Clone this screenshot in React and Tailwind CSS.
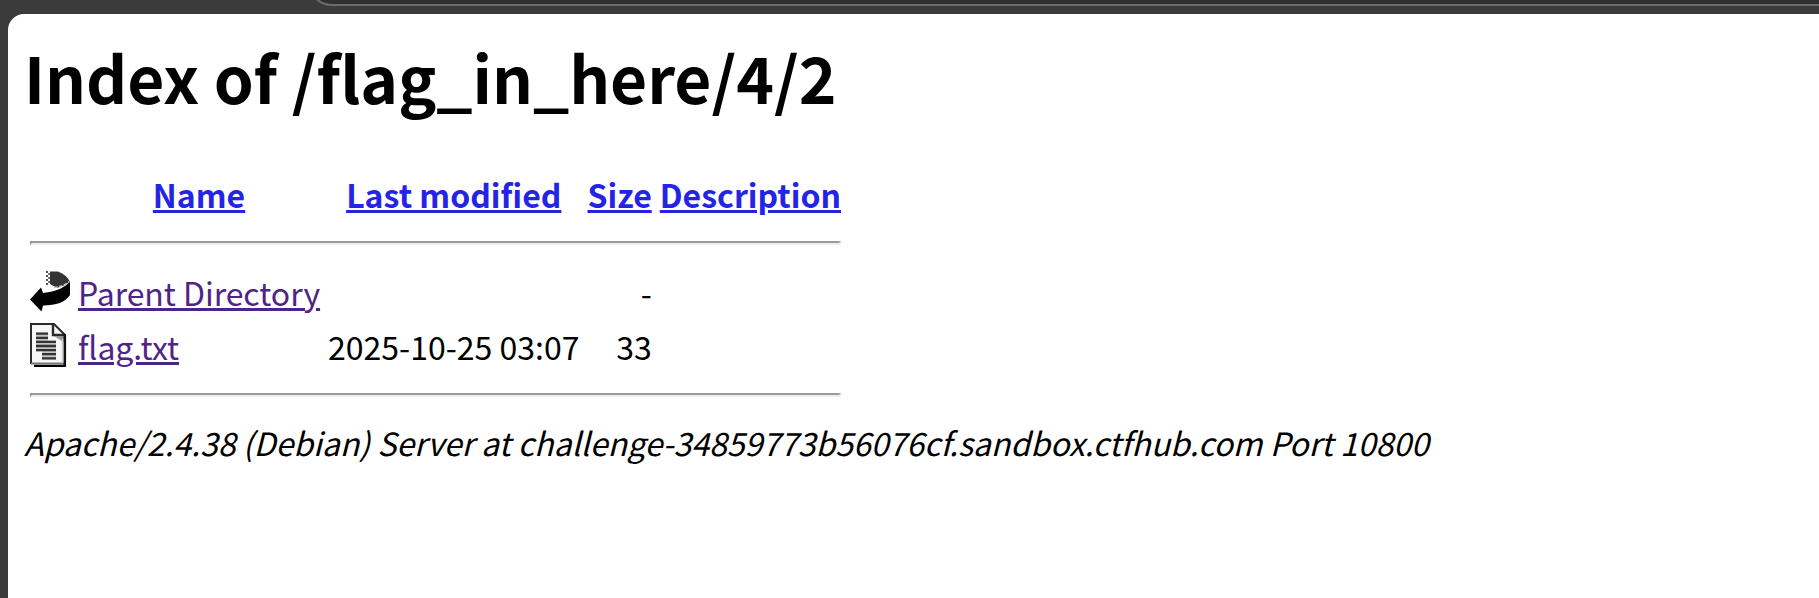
function BackIcon() {
  return (
    <svg width="40" height="44" viewBox="0 0 40 44" className="block">
      <path d="M20 2.500H28Q37 6 40 13L34 16.500L27 19L20 15Z" fill="#333" />
      <path d="M17 2V16" stroke="#555" strokeWidth="2" strokeDasharray="2 2" />
      <path d="M19 4V16" stroke="#777" strokeWidth="2" strokeDasharray="2 2" />
      <path d="M0 30.500L11 18.500L13 24Q27 22.500 35 17L40 13V26Q33 36.500 13 36.500L11.500 42.500Z" fill="#000" />
      <path d="M24 18.500Q34 17.500 39 12.500" fill="none" stroke="#c8c8c8" strokeWidth="1.600" strokeDasharray="3.500 1.500" />
    </svg>
  );
}

function TextIcon() {
  return (
    <svg width="40" height="44" viewBox="0 0 40 44" className="block">
      <path d="M1 1H24L35 12V42H5L1 40Z" fill="#f7f7f7" />
      <path d="M1 41V1H24L35 12" fill="none" stroke="#2a2a2a" strokeWidth="2" />
      <path d="M23 1V12H35" fill="none" stroke="#2a2a2a" strokeWidth="2.400" />
      <path d="M24 13H35V20Z" fill="#999" />
      <path d="M1 40.500H34" stroke="#777" strokeWidth="2" />
      <path d="M4 43H36" stroke="#000" strokeWidth="2.400" />
      <path d="M34.800 11V44" stroke="#111" strokeWidth="2.600" />
      <path d="M32.500 16V40" stroke="#ccc" strokeWidth="1.500" />
      <path d="M6 9.500H18V17.500H26V36.500H12V28.500H6Z" fill="#c4c4c4" />
      <path d="M6 10.700H18M6 14.800H18M6 18.900H26M6 23H26M6 27.100H26M12 31.200H26M12 35.300H26" stroke="#333" strokeWidth="2.300" />
    </svg>
  );
}

function Rule() {
  return (
    <tr>
      <th colSpan={5} className="p-0.5">
        <hr className="my-4 h-0 border-2 border-t-[#9a9a9a] border-r-[#eeeeee] border-b-[#eeeeee] border-l-[#9a9a9a]" />
      </th>
    </tr>
  );
}

function Heading({ children }) {
  return (
    <th className="p-0.5 text-center font-bold">
      <a href="#" className="text-[#2424e6] underline">{children}</a>
    </th>
  );
}

function Entry({ icon, name, modified, size }) {
  return (
    <tr>
      <td className="p-0.5 align-top">{icon}</td>
      <td className="p-0.5"><a href="#" className="tracking-[-0.05px] text-[#4f2487] underline">{name}</a></td>
      <td className="p-0.5 text-right">{modified}</td>
      <td className="p-0.5 text-right">{size}</td>
      <td className="p-0.5"></td>
    </tr>
  );
}

export default function App() {
  return (
    <div className="flex h-[598px] flex-col overflow-hidden bg-[#3b3b3b] font-['Noto_Sans_CJK_SC',sans-serif] text-[32px] leading-[46px] text-black">
      <div className="flex h-3.5 shrink-0 items-end overflow-hidden pb-2 pl-[308px]">
        <div className="-mr-10 h-12 flex-1 rounded-[28px] border-2 border-[#6b6b6b] bg-[#303030]"></div>
      </div>
      <main className="ml-2 flex-1 rounded-tl-2xl bg-white pt-4 pl-4">
        <h1 className="mb-[43px] text-[64px] leading-[92px] font-bold tracking-[-0.04px] whitespace-nowrap">Index of /flag_in_here/4/2</h1>
        <table className="border-separate border-spacing-1 whitespace-nowrap">
          <tbody>
            <tr>
              <th className="p-0.5"></th>
              <Heading>Name</Heading>
              <Heading>Last modified</Heading>
              <Heading>Size</Heading>
              <Heading>Description</Heading>
            </tr>
            <Rule />
            <Entry icon={<BackIcon />} name="Parent Directory" modified="" size="-" />
            <Entry icon={<TextIcon />} name="flag.txt" modified="2025-10-25 03:07" size="33" />
            <Rule />
          </tbody>
        </table>
        <address className="tracking-[-0.013px] whitespace-nowrap italic">Apache/2.4.38 (Debian) Server at challenge-34859773b56076cf.sandbox.ctfhub.com Port 10800</address>
      </main>
    </div>
  );
}
